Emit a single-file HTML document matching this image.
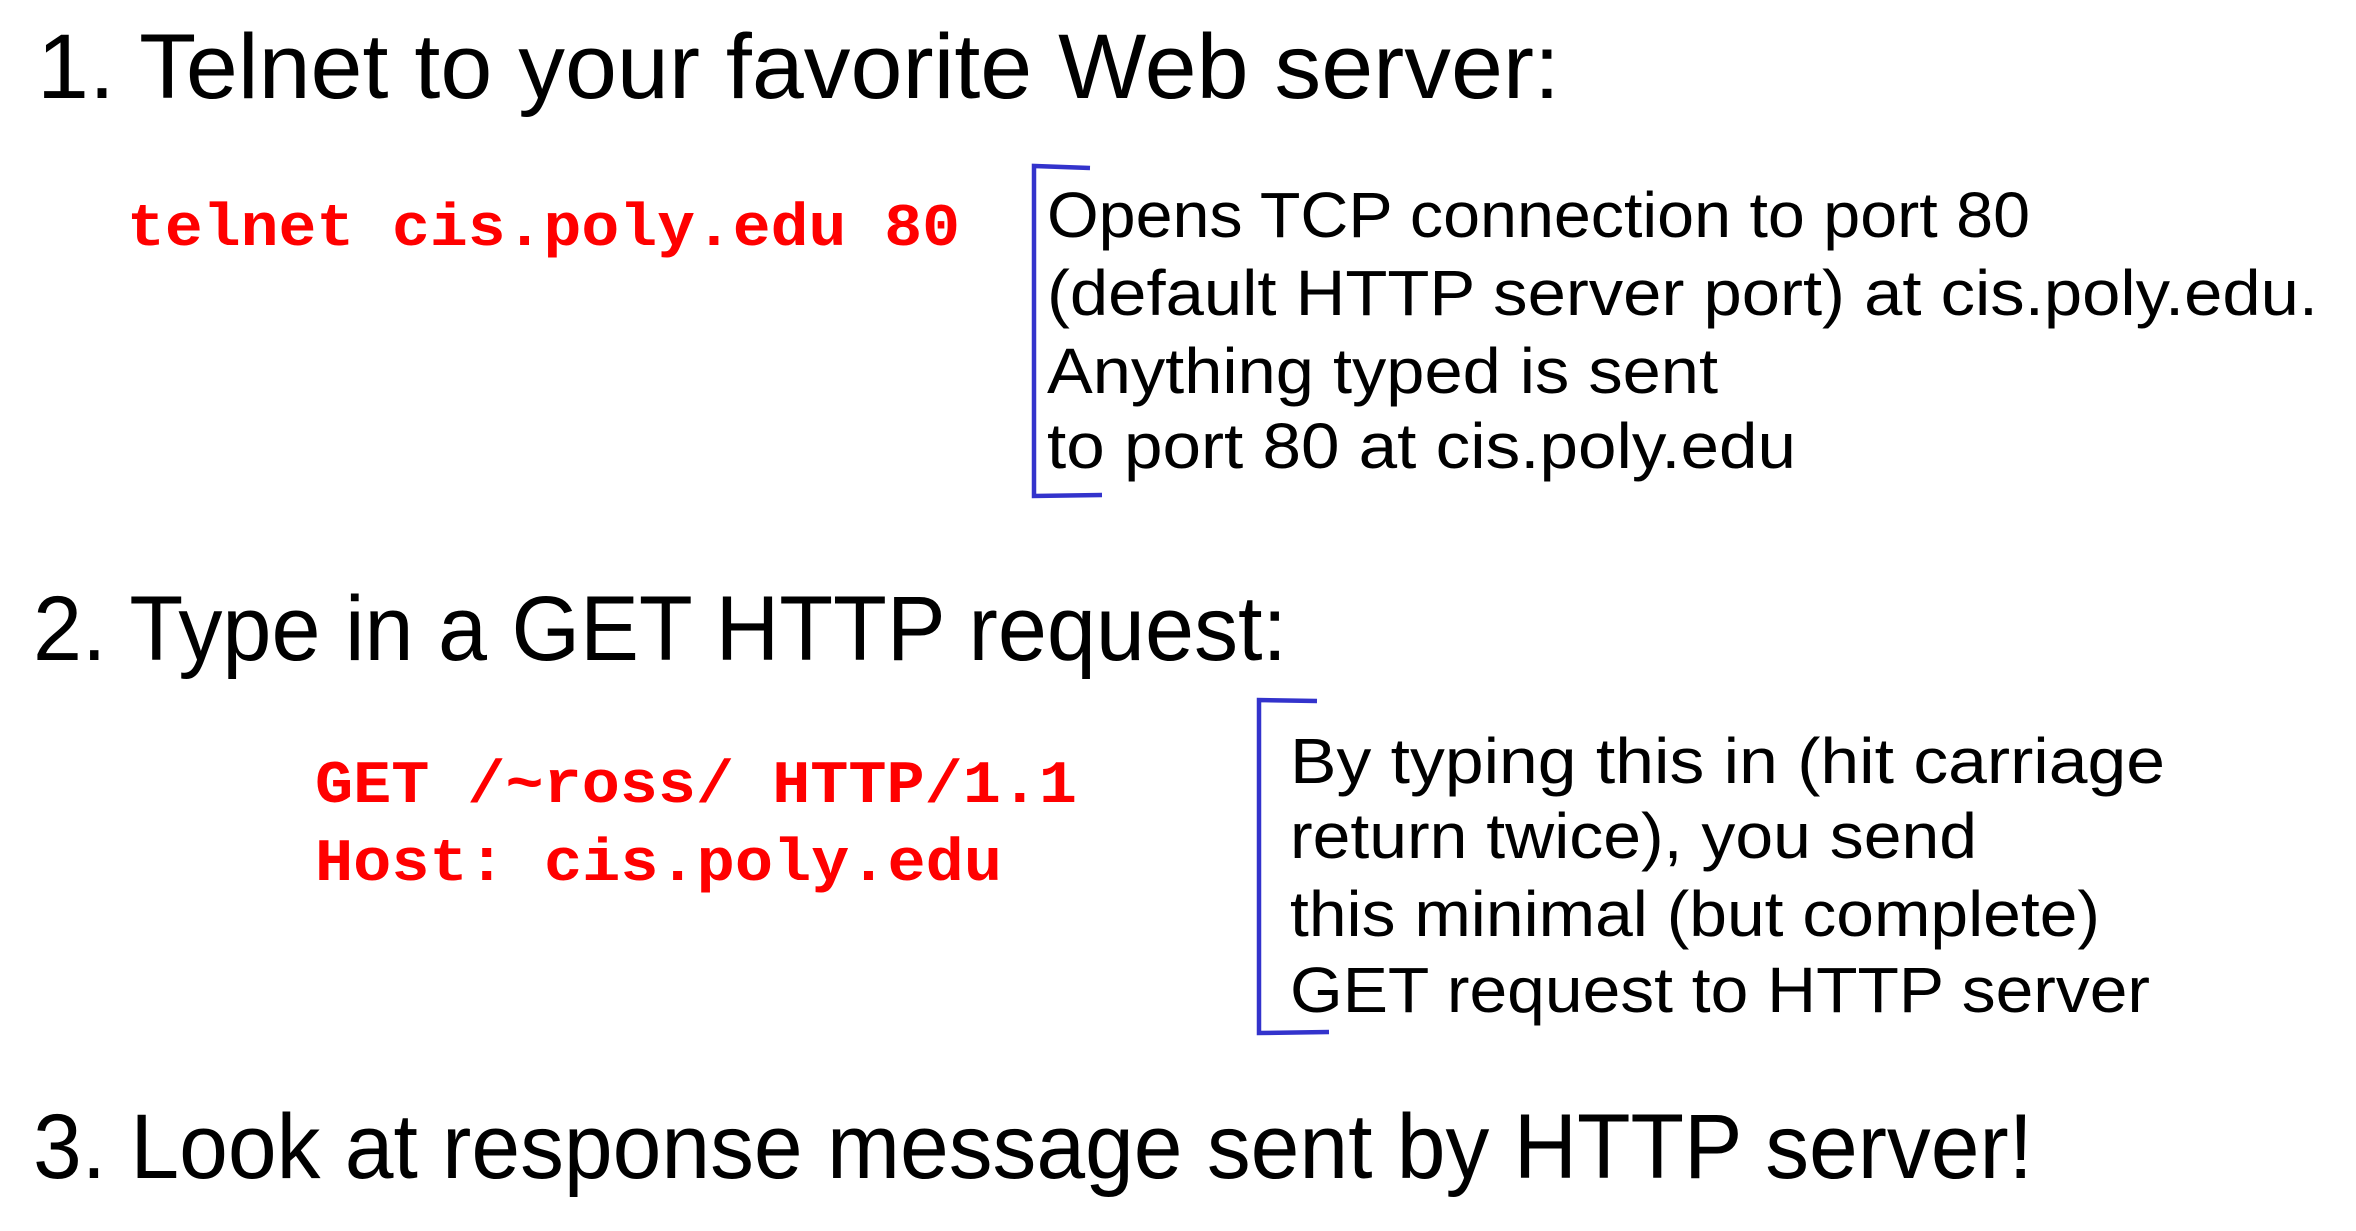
<!DOCTYPE html>
<html><head><meta charset="utf-8"><style>
html,body{margin:0;padding:0;background:#fff;}
svg{display:block;}
.h{font-family:"Liberation Sans",sans-serif;font-size:92px;fill:#000;}
.b{font-family:"Liberation Sans",sans-serif;font-size:64px;fill:#000;}
.c{font-family:"Liberation Mono",monospace;font-weight:bold;font-size:60px;fill:#ff0000;}
</style></head><body>
<svg width="2356" height="1231" viewBox="0 0 2356 1231" xmlns="http://www.w3.org/2000/svg">
<text class="h" x="37" y="98" textLength="1523" lengthAdjust="spacingAndGlyphs">1. Telnet to your favorite Web server:</text>
<text class="c" x="127" y="245" textLength="833" lengthAdjust="spacingAndGlyphs">telnet cis.poly.edu 80</text>
<path d="M1090 168 L1034 166 L1034 496 L1102 495" fill="none" stroke="#3333cc" stroke-width="4.5"/>
<text class="b" x="1047" y="237" textLength="983" lengthAdjust="spacingAndGlyphs">Opens TCP connection to port 80</text>
<text class="b" x="1047" y="315" textLength="1271" lengthAdjust="spacingAndGlyphs">(default HTTP server port) at cis.poly.edu.</text>
<text class="b" x="1047" y="393" textLength="671" lengthAdjust="spacingAndGlyphs">Anything typed is sent</text>
<text class="b" x="1047" y="468" textLength="749" lengthAdjust="spacingAndGlyphs">to port 80 at cis.poly.edu</text>

<text class="h" x="33" y="660" textLength="1254" lengthAdjust="spacingAndGlyphs">2. Type in a GET HTTP request:</text>
<text class="c" x="315" y="802" textLength="762" lengthAdjust="spacingAndGlyphs">GET /~ross/ HTTP/1.1</text>
<text class="c" x="315" y="880" textLength="687" lengthAdjust="spacingAndGlyphs">Host: cis.poly.edu</text>
<path d="M1317 701 L1259 700 L1259 1033 L1329 1032" fill="none" stroke="#3333cc" stroke-width="4.5"/>
<text class="b" x="1290" y="783" textLength="875" lengthAdjust="spacingAndGlyphs">By typing this in (hit carriage</text>
<text class="b" x="1290" y="858" textLength="687" lengthAdjust="spacingAndGlyphs">return twice), you send</text>
<text class="b" x="1290" y="936" textLength="810" lengthAdjust="spacingAndGlyphs">this minimal (but complete)</text>
<text class="b" x="1290" y="1012" textLength="860" lengthAdjust="spacingAndGlyphs">GET request to HTTP server</text>

<text class="h" x="33" y="1178" textLength="2000" lengthAdjust="spacingAndGlyphs">3. Look at response message sent by HTTP server!</text>
</svg>
</body></html>
